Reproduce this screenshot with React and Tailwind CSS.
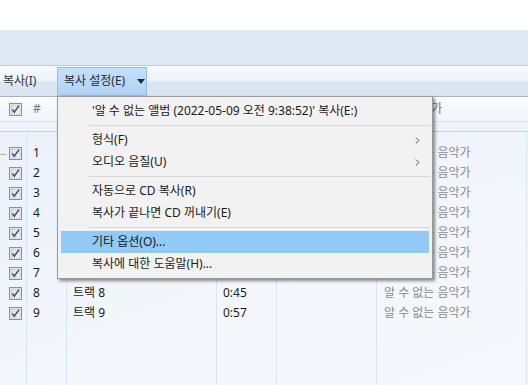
import { ChevronRight } from 'lucide-react';

const tracks = [
  { n: 1, title: '트랙 1', len: '0:41' },
  { n: 2, title: '트랙 2', len: '0:52' },
  { n: 3, title: '트랙 3', len: '0:38' },
  { n: 4, title: '트랙 4', len: '0:47' },
  { n: 5, title: '트랙 5', len: '0:55' },
  { n: 6, title: '트랙 6', len: '0:44' },
  { n: 7, title: '트랙 7', len: '0:50' },
  { n: 8, title: '트랙 8', len: '0:45' },
  { n: 9, title: '트랙 9', len: '0:57' },
];

const CheckBox = () => (
  <svg width="13" height="13" viewBox="0 0 13 13" className="block">
    <defs>
      <linearGradient id="cbg" x1="0" y1="0" x2="1" y2="1">
        <stop offset="0" stopColor="#dcdcdc" />
        <stop offset="1" stopColor="#fbfbfb" />
      </linearGradient>
    </defs>
    <rect x="0.5" y="0.5" width="12" height="12" fill="#f4f4f4" stroke="#8e8f8f" />
    <rect x="2" y="2" width="9" height="9" fill="url(#cbg)" stroke="#b9b9b9" strokeWidth="0.6" />
    <path d="M3.2 6.6 L5.3 9.2 L10 2.6" fill="none" stroke="#3b4f91" strokeWidth="1.6" />
  </svg>
);

const Sep = () => (
  <div className="ml-[31px] mr-[2px] my-[3px] h-px bg-[#d7d7d7]" />
);

const Item = ({ label, arrow, active }) => (
  <div
    className={`relative flex items-center h-[22px] mx-[3px] pl-[31px] leading-[16px] ${
      active ? 'bg-[#91c9f7]' : ''
    }`}
  >
    <span className="text-[#1a1a1a]">{label}</span>
    {arrow && (
      <ChevronRight className="absolute right-[6px] w-[11px] h-[11px] text-[#333]" strokeWidth={1.8} />
    )}
  </div>
);

export default function App() {
  return (
    <div
      className="relative w-[528px] h-[385px] overflow-hidden flex flex-col bg-white text-[12px] leading-[16px] text-[#1a1a1a]"
      style={{ fontFamily: '"Noto Sans", "Noto Sans CJK KR", sans-serif' }}
    >
      <div className="h-[30px] bg-white shrink-0" />
      <div className="h-[36px] bg-[#dfe8f5] border-b border-[#c3cad4] shrink-0" />

      {/* toolbar */}
      <div className="h-[31px] shrink-0 flex items-center border-b border-[#a9b4c2] bg-[linear-gradient(to_bottom,#f7f9fd_0%,#eef3fa_50%,#dce6f3_52%,#dae4f2_100%)]">
        <span className="ml-[3px] w-[54px] text-[#333]">복사(I)</span>
        <div className="h-[29px] w-[90px] flex items-center pl-[6px] gap-[12px] border border-[#8fbfee] bg-[linear-gradient(to_bottom,#c4e0fa,#afd2f5)]">
          <span className="text-[#2a2a2a]">복사 설정(E)</span>
          <svg width="8" height="5" viewBox="0 0 8 5">
            <path d="M0 0 H8 L4 5 Z" fill="#1e2b3c" />
          </svg>
        </div>
      </div>

      {/* list */}
      <div className="flex-1 relative bg-[linear-gradient(160deg,#eaf1fa_0%,#f3f7fc_60%,#f5f8fc_100%)]">
        <div className="absolute inset-0 flex pointer-events-none">
          <div className="w-[27px] border-r border-[#d8e5f5]" />
          <div className="w-[40px] border-r border-[#d8e5f5]" />
          <div className="w-[150px] border-r border-[#d8e5f5]" />
          <div className="w-[60px] border-r border-[#d8e5f5]" />
          <div className="w-[100px] border-r border-[#d8e5f5]" />
          <div className="w-[150px] border-r border-[#d8e5f5]" />
        </div>

        <div className="relative">
          <div className="h-[25px] flex items-center bg-[linear-gradient(to_bottom,#fbfcfe,#f1f5fb)] border-b border-[#d6e1ee]">
            <div className="w-[27px] pl-[9px]"><CheckBox /></div>
            <div className="w-[40px] pl-[6px] text-[#777]">#</div>
            <div className="w-[310px]" />
            <div className="pl-[7px] text-[#777]">참여 음악가</div>
          </div>
          <div className="h-[10px] bg-[#eef3fa] border-b border-[#c8d2de]" />

          <div className="pt-[11px]">
            {tracks.map((t) => (
              <div key={t.n} className="h-[20px] flex items-center">
                <div className="relative w-[27px] pl-[9px]">
                  {t.n === 1 && (
                    <span className="absolute left-0 top-[-3px] text-[8px] text-[#555]">…</span>
                  )}
                  <CheckBox />
                </div>
                <div className="w-[40px] pl-[6px]">{t.n}</div>
                <div className="w-[150px] pl-[6px]">{t.title}</div>
                <div className="w-[60px] pl-[6px]">{t.len}</div>
                <div className="w-[100px]" />
                <div className="pl-[7px] text-[#8a8a8a]">알 수 없는 음악가</div>
              </div>
            ))}
          </div>
        </div>
      </div>

      {/* dropdown menu */}
      <div className="absolute left-[57px] top-[96px] w-[376px] py-[3px] bg-[#f2f2f2] border border-[#9a9a9a] shadow-[2px_2px_3px_rgba(0,0,0,0.45)]">
        <Item label="'알 수 없는 앨범 (2022-05-09 오전 9:38:52)' 복사(E:)" />
        <Sep />
        <Item label="형식(F)" arrow />
        <Item label="오디오 음질(U)" arrow />
        <Sep />
        <Item label="자동으로 CD 복사(R)" />
        <Item label="복사가 끝나면 CD 꺼내기(E)" />
        <Sep />
        <Item label="기타 옵션(O)..." active />
        <Item label="복사에 대한 도움말(H)..." />
      </div>
    </div>
  );
}
